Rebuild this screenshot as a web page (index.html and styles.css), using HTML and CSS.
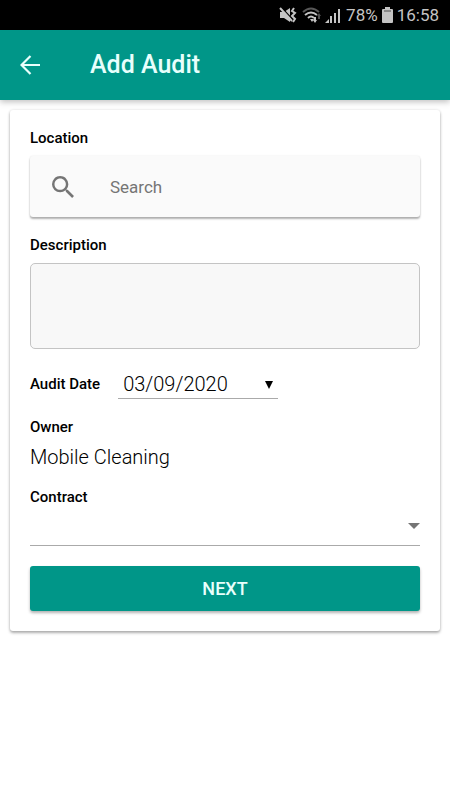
FILE: index.html
```html
<!DOCTYPE html>
<html lang="en">
<head>
<meta charset="utf-8">
<meta name="viewport" content="width=device-width, initial-scale=1">
<title>Add Audit</title>
<link rel="stylesheet" href="styles.css">
</head>
<body>
<div class="status">
  <svg class="status-mute" viewBox="0 0 18 18" aria-hidden="true">
    <path d="M1 6h4l6-4v14l-6-4H1z" fill="currentColor"/>
    <path d="M2 1l13 14" stroke="#000" stroke-width="1.500"/>
    <path d="M1 2l12 13" stroke="currentColor" stroke-width="2"/>
    <path d="M15 2l-2 3 3 2-3 3 3 3-2 3" fill="none" stroke="currentColor" stroke-width="2"/>
  </svg>
  <svg class="status-wifi" viewBox="0 0 21 18" aria-hidden="true">
    <g fill="none" stroke="currentColor" stroke-width="2">
      <path d="M1 6q8-7 16 0" opacity=".45"/>
      <path d="M3 9q6-5 12 0M6 12q3-3 6 0"/>
    </g>
    <path d="M8 13h4l-2 3zM11 14h4l-2 3zM12 11h2v3h-2z" fill="currentColor"/>
    <path d="M15 10l2-3 2 3h-1v3h-2v-3z" fill="currentColor" opacity=".4"/>
  </svg>
  <svg class="status-signal" viewBox="0 0 17 18" aria-hidden="true">
    <path d="M0 17h4v-4zM5 10h2v7H5zM9 7h2v10H9zM13 3h2v14h-2z" fill="currentColor"/>
  </svg>
  <span>78%</span>
  <svg class="status-cell" viewBox="0 0 11 18" aria-hidden="true">
    <path d="M3 1h5v2h2q1 0 1 1v12q0 1-1 1H1q-1 0-1-1V4q0-1 1-1h2z" fill="currentColor"/>
    <path d="M2 5h7" stroke="#000" opacity=".6"/>
  </svg>
  <span>16:58</span>
</div>
<header class="appbar">
  <button class="back" type="button" aria-label="Back">
    <svg viewBox="0 0 20 20" aria-hidden="true"><path d="M20 10H2M10.500 1L1.500 10l9 9" fill="none" stroke="currentColor" stroke-width="2.200"/></svg>
  </button>
  <h1>Add Audit</h1>
</header>
<main>
  <form class="card">
    <div class="field">
      <label for="location">Location</label>
      <div class="search">
        <svg viewBox="3 3 17.500 17.500" aria-hidden="true"><path d="M15.500 14h-.79l-.28-.27A6.470 6.470 0 0 0 16 9.500 6.500 6.500 0 1 0 9.500 16c1.610 0 3.090-.59 4.230-1.570l.27.28v.79l5 4.990L20.490 19l-4.990-5zm-6 0C7.010 14 5 11.990 5 9.500S7.010 5 9.500 5 14 7.010 14 9.500 11.990 14 9.500 14z" fill="currentColor"/></svg>
        <input id="location" type="text" placeholder="Search">
      </div>
    </div>
    <div class="field">
      <label for="description">Description</label>
      <textarea id="description"></textarea>
    </div>
    <div class="date-field">
      <label for="date">Audit Date</label>
      <div class="date">
        <select id="date"><option>03/09/2020</option></select>
        <svg viewBox="0 0 8 8" aria-hidden="true"><path d="M0 0h8L4 8z" fill="currentColor"/></svg>
      </div>
    </div>
    <div class="owner">
      <h2>Owner</h2>
      <p>Mobile Cleaning</p>
    </div>
    <div class="contract">
      <label for="contract">Contract</label>
      <div class="picker">
        <select id="contract"><option></option></select>
        <svg viewBox="0 0 12 6" aria-hidden="true"><path d="M0 0h12L6 6z" fill="currentColor"/></svg>
      </div>
    </div>
    <button class="next" type="button">NEXT</button>
  </form>
</main>
</body>
</html>
```
FILE: styles.css
```css
* { box-sizing: border-box; }
body {
  margin: 0;
  background: #fff;
  color: #000;
  font-family: Roboto, "Liberation Sans", sans-serif;
}
h1, h2, p { margin: 0; }
button, input, select, textarea { font: inherit; color: inherit; }
svg { display: block; flex: none; }

.status {
  display: flex;
  align-items: center;
  justify-content: flex-end;
  height: 30px;
  padding-right: 11px;
  background: #000;
  color: #c4c4c4;
  font-size: 17px;
}
.status-mute { width: 18px; height: 18px; margin-right: 5px; }
.status-wifi { width: 21px; height: 18px; margin-right: 2px; }
.status-signal { width: 17px; height: 18px; margin-right: 4px; }
.status-cell { width: 11px; height: 18px; margin: 0 4px; }

.appbar {
  display: flex;
  align-items: center;
  gap: 50px;
  height: 70px;
  padding: 0 20px;
  background: #009688;
  color: #e8fffc;
  box-shadow: 0 2px 6px rgba(0, 0, 0, .25);
}
.back {
  padding: 0;
  border: 0;
  background: none;
}
.back svg { width: 20px; height: 20px; }
h1 { font-size: 25px; line-height: 30px; font-weight: 500; }

main { padding: 10px; }
.card {
  display: flex;
  flex-direction: column;
  padding: 20px;
  border-radius: 3px;
  background: #fff;
  box-shadow: 0 2px 3px rgba(0, 0, 0, .3), 0 0 3px rgba(0, 0, 0, .12);
}
label, h2 {
  display: block;
  font-size: 15px;
  line-height: 16px;
  font-weight: 500;
}
.field { margin-bottom: 20px; }
.field label { margin-bottom: 10px; }

.search {
  display: flex;
  align-items: center;
  gap: 36px;
  height: 61px;
  padding: 0 22px;
  border-radius: 3px;
  background: #fafafa;
  color: #757575;
  box-shadow: 0 2px 2px rgba(0, 0, 0, .3), 0 0 2px rgba(0, 0, 0, .1);
}
.search svg { width: 22px; height: 22px; }
.search input {
  flex: 1;
  min-width: 0;
  padding: 0;
  border: 0;
  outline: 0;
  background: none;
  font-size: 17px;
}
.search input::placeholder { color: #757575; opacity: 1; }

textarea {
  display: block;
  width: 100%;
  height: 86px;
  padding: 10px;
  border: 1px solid #c4c4c4;
  border-radius: 5px;
  outline: 0;
  resize: none;
  background: #f8f8f8;
}

select {
  width: 100%;
  appearance: none;
  border: 0;
  outline: 0;
  border-radius: 0;
  background: none;
}
.date-field {
  display: flex;
  align-items: center;
  gap: 18px;
  margin-bottom: 20px;
}
.date, .picker { position: relative; }
.date { width: 160px; }
.date select {
  display: block;
  height: 30px;
  padding: 0 5px;
  border-bottom: 1px solid #aaa;
  font-size: 20px;
  font-weight: 300;
}
.date svg {
  position: absolute;
  right: 5px;
  top: 12px;
  width: 8px;
  height: 8px;
  pointer-events: none;
}
.owner { margin-bottom: 20px; }
.owner p {
  margin-top: 10px;
  font-size: 20px;
  line-height: 24px;
  font-weight: 300;
}
.contract { margin-bottom: 20px; }
.picker select {
  display: block;
  height: 41px;
  border-bottom: 1px solid #aaa;
}
.picker svg {
  position: absolute;
  right: 0;
  top: 18px;
  width: 12px;
  height: 6px;
  color: #757575;
  pointer-events: none;
}
.next {
  height: 45px;
  border: 0;
  border-radius: 3px;
  background: #009688;
  color: #e8fffc;
  font-size: 18px;
  font-weight: 500;
  box-shadow: 0 2px 3px rgba(0, 0, 0, .3);
}
```
